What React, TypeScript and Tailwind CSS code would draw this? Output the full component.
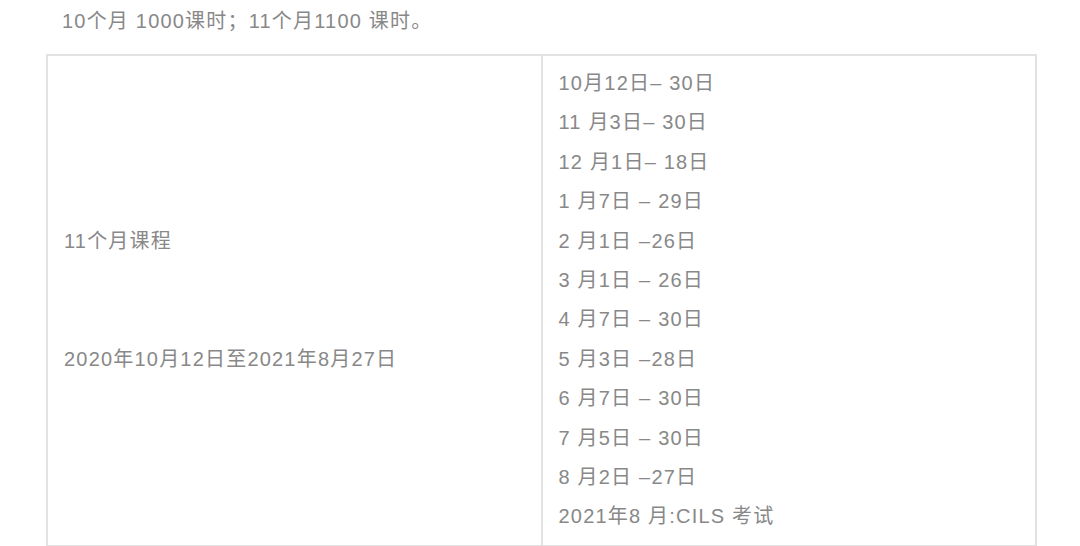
const ranges = [
  "10月12日– 30日",
  "11 月3日– 30日",
  "12 月1日– 18日",
  "1 月7日 – 29日",
  "2 月1日 –26日",
  "3 月1日 – 26日",
  "4 月7日 – 30日",
  "5 月3日 –28日",
  "6 月7日 – 30日",
  "7 月5日 – 30日",
  "8 月2日 –27日",
  "2021年8 月:CILS 考试",
];

export default function App() {
  return (
    <div className="h-[546px] w-[1080px] overflow-hidden bg-white pl-[46px] pr-[43px] font-['Liberation_Sans','Noto_Sans_CJK_SC',sans-serif] text-[20px] tracking-[1.2px] text-[#888]">
      <p className="pl-4 pt-[8px] leading-[26px]">10个月 1000课时；11个月1100 课时。</p>
      <table className="mt-[20px] w-full border-collapse">
        <tbody>
          <tr>
            <td className="w-1/2 border-2 border-[#e2e2e2] px-4 py-2 align-middle leading-[39.4px]">
              <p>11个月课程</p>
              <p>&nbsp;</p>
              <p>&nbsp;</p>
              <p>2020年10月12日至2021年8月27日</p>
            </td>
            <td className="w-1/2 border-2 border-[#e2e2e2] px-4 py-2 leading-[39.4px]">
              {ranges.map((r) => (
                <p key={r}>{r}</p>
              ))}
            </td>
          </tr>
        </tbody>
      </table>
    </div>
  );
}
